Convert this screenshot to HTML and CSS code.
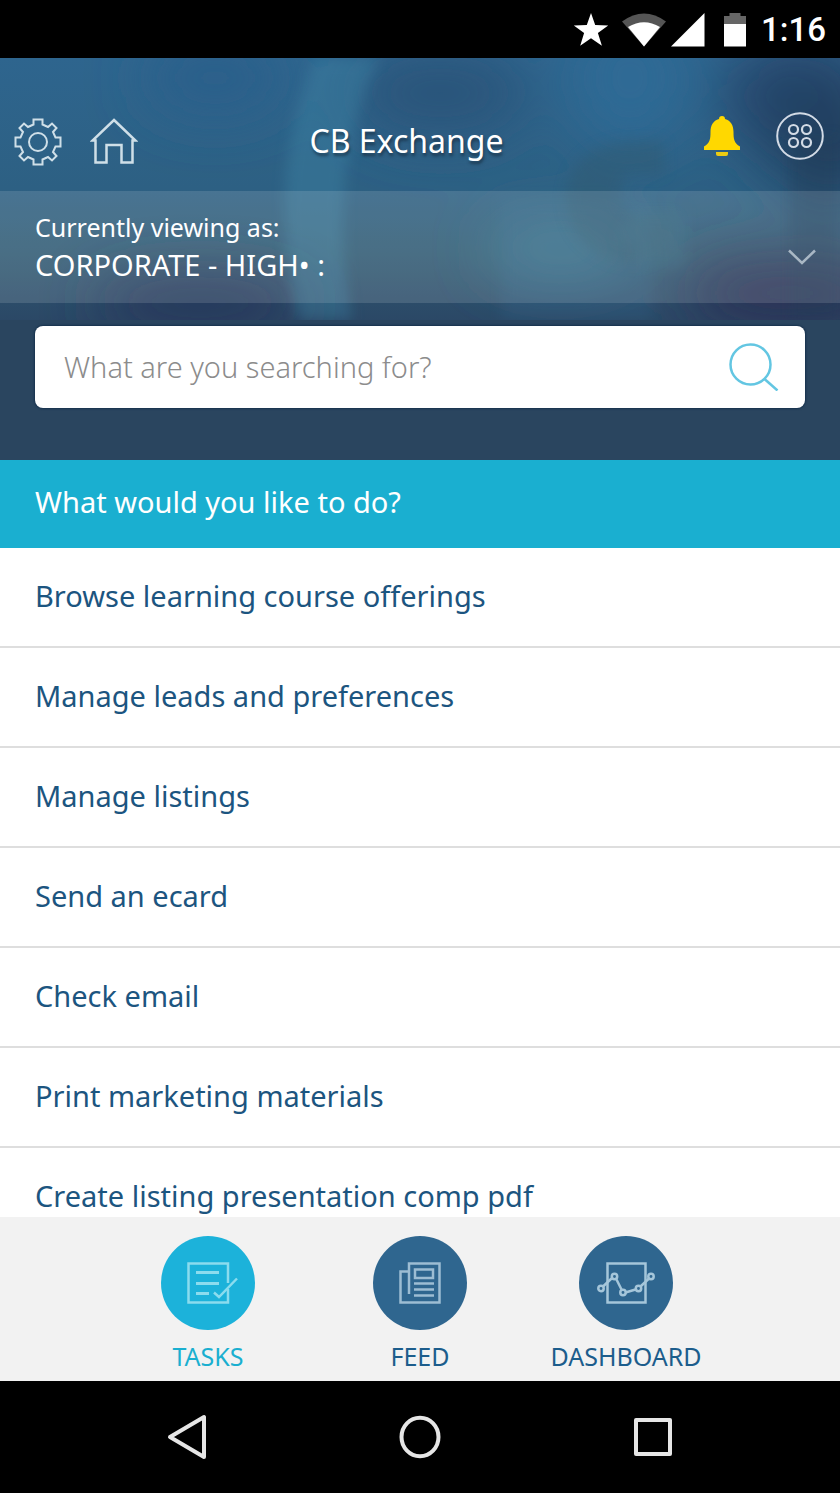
FILE: index.html
```html
<!DOCTYPE html>
<html lang="en">
<head>
<meta charset="utf-8">
<meta name="viewport" content="width=device-width, initial-scale=1">
<title>CB Exchange</title>
<link rel="stylesheet" href="styles.css">
</head>
<body>
<div class="status">
  <svg width="36" height="34" viewBox="0 0 36 34" fill="#fff" aria-hidden="true"><path d="M18 0l4.200 12.100 13 .3-10.300 7.700 4 12.600L18 25.300 7.200 32.700l3.900-12.600L.8 12.400l13-.3z"/></svg>
  <svg width="46" height="34" viewBox="0 0 46 34" aria-hidden="true"><path d="M1 8.500Q23-7.500 45 8.500L23 33.500z" fill="#555"/><path d="M7 14Q23 4.500 39 14L23 33.500z" fill="#fff"/></svg>
  <svg width="34" height="34" viewBox="0 0 34 34" aria-hidden="true"><path d="M33.500 0v33.500H0z" fill="#fff"/></svg>
  <svg class="battery" width="24" height="34" viewBox="0 0 24 34" aria-hidden="true"><path d="M6.500 0h11v3H23v8H1V3h5.500z" fill="#666"/><path d="M1 11h22v22.500H1z" fill="#fff"/></svg>
  <span class="clock">1:16</span>
</div>

<header class="hero">
  <svg class="art" viewBox="0 0 840 262" preserveAspectRatio="none" aria-hidden="true">
    <defs>
      <linearGradient id="base" x1="0" y1="0" x2="0" y2="1">
        <stop offset="0" stop-color="#2e658e"/><stop offset=".5" stop-color="#2d6083"/><stop offset=".75" stop-color="#2e5972"/><stop offset="1" stop-color="#2b4866"/>
      </linearGradient>
      <filter id="soft" x="-50%" y="-50%" width="200%" height="200%"><feGaussianBlur stdDeviation="28"/></filter>
      <filter id="edge" x="-20%" y="-20%" width="140%" height="140%"><feGaussianBlur stdDeviation="7"/></filter>
    </defs>
    <rect width="840" height="262" fill="url(#base)"/>
    <g filter="url(#soft)">
      <ellipse cx="440" cy="35" rx="90" ry="45" fill="#29547a"/>
      <ellipse cx="215" cy="20" rx="70" ry="35" fill="#2c5f8a"/>
      <ellipse cx="630" cy="20" rx="60" ry="70" fill="#2f6a95"/>
      <ellipse cx="800" cy="40" rx="80" ry="60" fill="#26466d"/>
      <ellipse cx="830" cy="80" rx="65" ry="60" fill="#223f60"/>
      <ellipse cx="200" cy="245" rx="110" ry="28" fill="#283459"/>
      <ellipse cx="560" cy="190" rx="75" ry="30" fill="#35738b"/>
      <ellipse cx="790" cy="235" rx="110" ry="38" fill="#2a3055"/>
    </g>
    <path d="M315 0h64Q325 110 352 262H298Q265 120 315 0z" fill="#3f88a8" opacity=".38" filter="url(#edge)"/>
    <path d="M502 140h150v122H502z" fill="#386b95" opacity=".2" filter="url(#edge)"/>
    <path d="M664 84Q570 75 566 140Q568 196 632 206Q665 202 675 180V158H635Q610 150 625 116H664z" fill="#31596c" opacity=".38" filter="url(#edge)"/>
    <path d="M635 150h50v60h-50v-26h-20z" fill="#37728b" opacity=".25" filter="url(#edge)"/>
    <path d="M790 80h50v182h-50z" fill="#233c59" opacity=".35" filter="url(#edge)"/>
  </svg>

  <div class="topbar">
    <div class="group group-left">
      <button class="icon" type="button" aria-label="Settings"><svg width="48" height="48" viewBox="0 0 48 48" fill="none" stroke="#cfdfe8" stroke-width="2"><path d="M19.500 1.500H28.500V6.500L34 9L38 5.500L42.500 10L39 14L41.500 19.500H46.500V28.500H41.500L39 34L42.500 38L38 42.500L34 39L28.500 41.500V46.500H19.500V41.500L14 39L10 42.500L5.500 38L9 34L6.500 28.500H1.500V19.500H6.500L9 14L5.500 10L10 5.500L14 9L19.500 6.500Z"/><circle cx="24" cy="24" r="9"/></svg></button>
      <button class="icon" type="button" aria-label="Home"><svg width="48" height="48" viewBox="0 0 48 48" fill="none" stroke="#cfdfe8" stroke-width="2.500"><path d="M24 2L45.500 22.500H42.500V44.500H31.500V27H16.500V44.500H5.500V22.500H2.500Z"/></svg></button>
    </div>
    <h1 class="title">CB Exchange</h1>
    <div class="group group-right">
      <button class="icon" type="button" aria-label="Notifications"><svg width="38" height="42" viewBox="0 0 38 42" fill="#ffd800"><path d="M19 1c2 0 3 1.300 3 3 6 1.700 8.500 6.500 8.500 13 0 7 .5 11 6.500 14.500V35H1v-3.500C7 28 7.500 24 7.500 17 7.500 10.500 10 5.700 16 4c0-1.700 1-3 3-3z"/><path d="M13 37h12v2q0 2-2 2h-8q-2 0-2-2z" fill="#eccb12"/></svg></button>
      <button class="icon" type="button" aria-label="Apps"><svg width="48" height="48" viewBox="0 0 48 48" fill="none" stroke="#d3dbe6" stroke-width="2"><circle cx="24" cy="24" r="22.800"/><g stroke-width="2.200"><circle cx="17.500" cy="17.500" r="4.500"/><circle cx="30.500" cy="17.500" r="4.500"/><circle cx="17.500" cy="30.500" r="4.500"/><circle cx="30.500" cy="30.500" r="4.500"/></g></svg></button>
    </div>
  </div>

  <button class="viewing" type="button">
    <span class="viewing-text"><span class="viewing-label">Currently viewing as:</span><span class="viewing-role">CORPORATE - HIGH• :</span></span>
    <svg width="28" height="16" viewBox="0 0 28 16" fill="none" stroke="#a9b7c4" stroke-width="2.500" aria-hidden="true"><path d="M1 1.500L14 14L27 1.500"/></svg>
  </button>

  <form class="search">
    <input class="search-input" type="text" aria-label="Search" placeholder="What are you searching for?">
    <button class="icon" type="button" aria-label="Submit search"><svg width="50" height="48" viewBox="0 0 50 48" fill="none" stroke="#63c6e2" stroke-width="2.500"><circle cx="21.500" cy="21.500" r="20"/><path d="M35.500 36L48.500 47.500"/></svg></button>
  </form>
</header>

<h2 class="section">What would you like to do?</h2>
<main class="tasks">
  <a class="task" href="#">Browse learning course offerings</a>
  <a class="task" href="#">Manage leads and preferences</a>
  <a class="task" href="#">Manage listings</a>
  <a class="task" href="#">Send an ecard</a>
  <a class="task" href="#">Check email</a>
  <a class="task" href="#">Print marketing materials</a>
  <a class="task" href="#">Create listing presentation comp pdf</a>
</main>

<nav class="tabs" aria-label="Sections">
  <a class="tab tab-active" href="#"><span class="disc"><svg width="52" height="44" viewBox="0 0 52 44" fill="none" stroke="#8bdcee" stroke-width="2.500"><path d="M42 22V2.500H2.500V41.500H42V28"/><path d="M10 11.500H33M10 22.500H33M10 32.500H23" stroke-width="3"/><path d="M28 31.500L33 36L51 17.500"/></svg></span>TASKS</a>
  <a class="tab" href="#"><span class="disc"><svg width="42" height="44" viewBox="0 0 42 44" fill="none" stroke="#9dbdd3" stroke-width="2.500"><path d="M10 33V2.500H40.500V41.500H1.500V10.500H10"/><path d="M16 8.500H34V17H16ZM15 22.500H35M15 28.500H35M15 34.500H35"/></svg></span>FEED</a>
  <a class="tab" href="#"><span class="disc"><svg width="58" height="44" viewBox="0 0 58 44" fill="none" stroke="#a5c6da" stroke-width="2.500"><path d="M10.500 2.500H48.500V41.500H10.500Z"/><path d="M6 25.500L14.500 17.500M19.500 18.500L24.500 28.500M28.500 31.500L38.500 28.500M43.500 25.500L52 17.500"/><circle cx="4" cy="27.500" r="2.700"/><circle cx="17.500" cy="15.500" r="2.700"/><circle cx="26" cy="31.500" r="2.700"/><circle cx="41.500" cy="27.500" r="2.700"/><circle cx="54" cy="15.500" r="2.700"/></svg></span>DASHBOARD</a>
</nav>

<div class="system">
  <button class="icon" type="button" aria-label="Back"><svg width="42" height="46" viewBox="0 0 42 46" fill="none" stroke="#e6e6e6" stroke-width="4" stroke-linejoin="round"><path d="M38 3V43L4 23Z"/></svg></button>
  <button class="icon" type="button" aria-label="Home screen"><svg width="42" height="44" viewBox="0 0 42 44" fill="none" stroke="#e6e6e6" stroke-width="4"><ellipse cx="21" cy="22" rx="18.500" ry="19.200"/></svg></button>
  <button class="icon" type="button" aria-label="Recent apps"><svg width="40" height="40" viewBox="0 0 40 40" fill="none" stroke="#e6e6e6" stroke-width="4" stroke-linejoin="round"><path d="M3 3H37V37H3Z"/></svg></button>
</div>
</body>
</html>
```
FILE: styles.css
```css
* { box-sizing: border-box; }

body {
  margin: 0;
  height: 100vh;
  display: flex;
  flex-direction: column;
  background: #fff;
  color: #1c5580;
  font-family: "Noto Sans", "Open Sans", sans-serif;
}

button { font: inherit; color: inherit; cursor: pointer; }
svg { display: block; }
.icon { display: block; padding: 0; border: 0; background: none; }

.status {
  flex: none;
  height: 58px;
  padding: 2px 14px 0;
  display: flex;
  align-items: center;
  justify-content: flex-end;
  gap: 14px;
  background: #000;
  color: #fff;
}
.status svg + svg { margin-left: -2px; }
.status svg:nth-child(3) { margin-left: -10px; }
.status .battery { margin-left: 4px; }
.clock { font: 500 33px/40px Roboto, sans-serif; }

.hero {
  flex: none;
  position: relative;
  isolation: isolate;
  padding-bottom: 52px;
  background: #2a455f;
  color: #fff;
}
.art { position: absolute; z-index: -1; top: 0; left: 0; width: 100%; height: 262px; }

.topbar {
  height: 133px;
  padding: 31px 16px 0 14px;
  display: flex;
  align-items: center;
  justify-content: space-between;
}
.group { display: flex; align-items: center; }
.group-left { gap: 28px; padding-top: 4px; }
.group-right { gap: 35px; padding-bottom: 8px; }
.title {
  margin: 0;
  padding-right: 28px;
  font-size: 32px;
  font-weight: 400;
  text-shadow: 1px 3px 3px rgba(20, 35, 50, .6);
}

.viewing {
  width: 100%;
  height: 112px;
  padding: 0 24px 0 35px;
  display: flex;
  align-items: center;
  justify-content: space-between;
  border: 0;
  background: rgba(255, 255, 255, .13);
  text-align: left;
}
.viewing-text { display: flex; flex-direction: column; }
.viewing svg { margin-top: 20px; }
.viewing-label { font-size: 25px; line-height: 36px; }
.viewing-role { font-size: 29px; line-height: 40px; }

.search {
  height: 82px;
  margin: 23px 35px 0;
  padding: 0 26px 0 29px;
  display: flex;
  align-items: center;
  border-radius: 8px;
  background: #fff;
  box-shadow: 0 0 2px 1px #16314d;
}
.search-input {
  flex: 1;
  min-width: 0;
  padding: 0;
  border: 0;
  outline: 0;
  background: none;
  color: #444;
  font: 300 29px/40px "Noto Sans", "Open Sans", sans-serif;
}
.search-input::placeholder { color: #8c8c8c; opacity: 1; }

.section {
  flex: none;
  margin: 0;
  padding: 22px 35px 26px;
  background: #1aafd0;
  color: #fff;
  font-size: 29px;
  line-height: 40px;
  font-weight: 400;
}

.tasks { flex: 1; min-height: 0; overflow: hidden; }
.task {
  display: block;
  padding: 28px 35px 30px;
  border-bottom: 2px solid #dedede;
  color: inherit;
  font-size: 29px;
  line-height: 40px;
  text-decoration: none;
}

.tabs {
  flex: none;
  height: 164px;
  padding: 19px 12px 0 0;
  display: grid;
  grid-template-columns: 212px 212px 200px;
  justify-content: center;
  background: #f2f2f2;
}
.tab {
  display: flex;
  flex-direction: column;
  align-items: center;
  gap: 8px;
  color: #1c5d8c;
  font-size: 25px;
  line-height: 36px;
  text-decoration: none;
}
.tab-active { color: #1aafd0; }
.disc {
  width: 94px;
  height: 94px;
  display: grid;
  place-items: center;
  border-radius: 50%;
  background: #2f668f;
}
.tab-active .disc { padding-left: 8px; background: #1cb2da; }

.system {
  flex: none;
  height: 112px;
  display: grid;
  grid-template-columns: repeat(3, 233px);
  justify-content: center;
  place-items: center;
  background: #000;
}
```
